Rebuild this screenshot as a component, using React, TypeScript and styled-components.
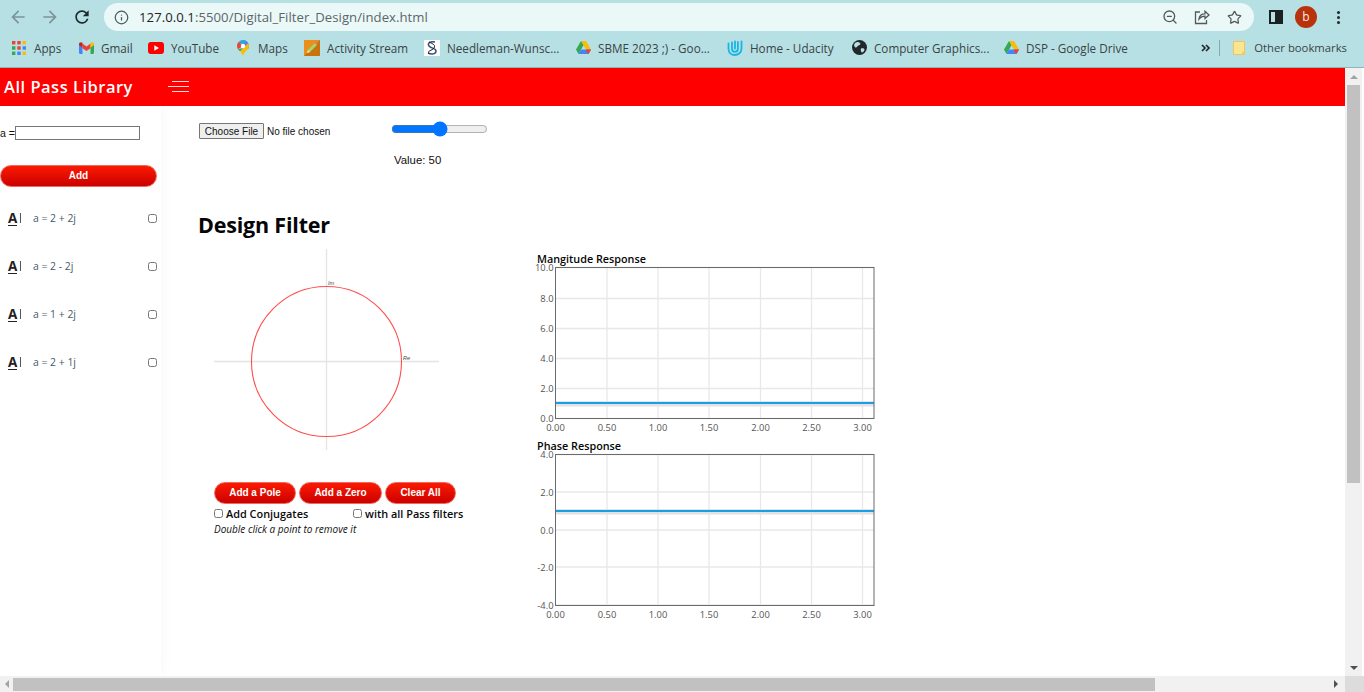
import { createGlobalStyle, styled } from "styled-components";
import { Info, Star, ZoomOut } from "lucide-react";

const GlobalStyle = createGlobalStyle`
  html, body {
    margin: 0;
    height: 100%;
    overflow: hidden;
    background: #fff;
  }
  #root {
    height: 100%;
  }
`;

const Shell = styled.div`
  height: 692px;
  width: 1364px;
  display: flex;
  flex-direction: column;
  overflow: hidden;
  font-family: "Liberation Sans", Arial, sans-serif;
`;

const Toolbar = styled.div`
  height: 34px;
  flex: none;
  display: flex;
  align-items: center;
  background: #b7e0e4;
  padding: 0 8px 0 6px;
  box-sizing: border-box;
`;

const NavButton = styled.div<{ $dim?: boolean }>`
  width: 24px;
  height: 24px;
  margin-right: 8px;
  display: flex;
  align-items: center;
  justify-content: center;
  color: ${({ $dim }) => ($dim ? "#7d9497" : "#1f2a2c")};
  &:nth-child(3) {
    margin-right: 10px;
  }
`;

const Omnibox = styled.div`
  width: 1150px;
  height: 28px;
  flex: none;
  display: flex;
  align-items: center;
  border-radius: 14px;
  background: #ebf8f8;
  padding: 0 8px 0 10px;
  box-sizing: border-box;
  color: #4e5a5c;
`;

const Url = styled.span`
  margin-left: 10px;
  flex: 1;
  font-family: "Open Sans", sans-serif;
  font-size: 13.15px;
  letter-spacing: 0.05px;
  color: #5b6668;
  b {
    font-weight: 400;
    color: #1d2526;
  }
`;

const OmniIcon = styled.div`
  width: 24px;
  margin-left: 8px;
  display: flex;
  justify-content: center;
  color: #56595a;
`;

const ToolIcons = styled.div`
  display: flex;
  align-items: center;
  margin-left: 15px;
  gap: 9px;
`;

const PanelIcon = styled.div`
  width: 14px;
  height: 14px;
  box-sizing: border-box;
  border: 2px solid #1b2021;
  border-right-width: 8px;
  margin: 0 3px 0 0;
`;

const Avatar = styled.div`
  width: 22px;
  height: 22px;
  border-radius: 50%;
  background: #b8330b;
  color: #ffe9e0;
  font-family: "Open Sans", sans-serif;
  font-size: 12px;
  line-height: 22px;
  text-align: center;
`;

const Dots = styled.div`
  width: 3px;
  height: 3px;
  border-radius: 50%;
  background: #23292a;
  margin-left: 11px;
  box-shadow: 0 -5px 0 #23292a, 0 5px 0 #23292a;
`;

const BookmarkBar = styled.div`
  height: 34px;
  flex: none;
  display: flex;
  align-items: center;
  padding: 0 0 6px 11px;
  box-sizing: border-box;
  background: #b7e0e4;
  border-bottom: 1px solid #93b5b9;
  font-family: "Open Sans", sans-serif;
  font-size: 11.7px;
  color: #3a4344;
`;

const Bookmark = styled.div<{ $width: number }>`
  width: ${({ $width }) => $width}px;
  flex: none;
  display: flex;
  align-items: center;
  white-space: nowrap;
`;

const BookmarkIcon = styled.div`
  width: 16px;
  height: 16px;
  margin-right: 7px;
  flex: none;
  display: flex;
  align-items: center;
  justify-content: center;
`;

const BookmarkRight = styled.div`
  margin-left: auto;
  display: flex;
  align-items: center;
  padding-right: 17px;
  font-size: 11.3px;
`;

const ChevronSlot = styled.div`
  display: flex;
  margin-right: 9px;
`;

const BarSeparator = styled.div`
  width: 1px;
  height: 16px;
  background: #8aa7aa;
  margin-right: 11px;
`;

const Viewport = styled.div`
  flex: 1;
  min-height: 0;
  display: flex;
`;

const Page = styled.div`
  width: 1345px;
  flex: none;
  display: flex;
  flex-direction: column;
`;

const AppBar = styled.header`
  height: 38px;
  flex: none;
  display: flex;
  align-items: center;
  box-sizing: border-box;
  padding: 0 0 2px 4px;
  background: #ff0000;
  color: #fff;
`;

const Brand = styled.div`
  width: 164px;
  font-family: "Open Sans", sans-serif;
  font-weight: 600;
  font-size: 16.5px;
  letter-spacing: 0.5px;
`;

const Hamburger = styled.div`
  width: 21px;
  display: flex;
  flex-direction: column;
  align-items: flex-end;
  gap: 4px;
`;

const HamburgerLine = styled.span<{ $width: number }>`
  display: block;
  height: 1px;
  width: ${({ $width }) => $width}px;
  background: #ffdcdc;
`;

const PageBody = styled.div`
  flex: 1;
  min-height: 0;
  display: flex;
`;

const Sidebar = styled.aside`
  width: 161px;
  flex: none;
  box-sizing: border-box;
  padding-top: 20px;
  background: #fff;
  box-shadow: 0 0 14px rgba(0, 0, 0, 0.045);
`;

const FieldRow = styled.label`
  display: flex;
  align-items: center;
  height: 14px;
  font-size: 10.6px;
  color: #111;
`;

const FieldInput = styled.input`
  width: 125px;
  height: 14px;
  box-sizing: border-box;
  margin: 0;
  padding: 0;
  border: 1px solid #767676;
  background: #fff;
`;

const RedButton = styled.button<{ $width: number }>`
  width: ${({ $width }) => $width}px;
  height: 22px;
  flex: none;
  padding: 0 0 1px;
  border: 1px solid #ee6a60;
  border-radius: 11px;
  background: linear-gradient(#fb1a00, #cb0000);
  color: #fff;
  font-family: "Liberation Sans", Arial, sans-serif;
  font-weight: 700;
  font-size: 10px;
  box-sizing: border-box;
`;

const AddSlot = styled.div`
  margin-top: 25px;
  margin-bottom: 7px;
  display: flex;
  height: 22px;
`;

const FilterRow = styled.div`
  height: 48px;
  display: flex;
  align-items: center;
  padding: 0 4px 0 8px;
`;

const LetterIcon = styled.span`
  width: 25px;
  flex: none;
  display: flex;
  align-items: flex-start;
  font-family: "Open Sans", sans-serif;
  font-weight: 700;
  font-size: 13.5px;
  line-height: 14px;
  color: #222;
`;

const LetterA = styled.span`
  border-bottom: 1.5px solid #222;
`;

const LetterBar = styled.span`
  width: 1px;
  height: 10px;
  margin: 2px 0 0 3px;
  background: #555;
`;

const FilterName = styled.span`
  flex: 1;
  font-family: "Open Sans", sans-serif;
  font-size: 10.4px;
  color: #47596a;
`;

const TinyCheck = styled.input.attrs({ type: "checkbox" })`
  width: 9px;
  height: 9px;
  margin: 0;
  flex: none;
`;

const Main = styled.main`
  flex: 1;
  min-width: 0;
  padding: 17px 0 0 38px;
`;

const UploadRow = styled.div`
  display: flex;
  align-items: flex-start;
  height: 84px;
`;

const FileField = styled.input`
  width: 192px;
  height: 18px;
  font-family: "Liberation Sans", Arial, sans-serif;
  font-size: 10px;
  color: #111;
  &::file-selector-button {
    width: 65px;
    height: 16px;
    margin-right: 3px;
    padding: 0;
    font-size: 10px;
    border: 1px solid #767676;
    border-radius: 1px;
    background: #efefef;
    color: #111;
  }
`;

const SliderBox = styled.div`
  font-size: 11.4px;
  color: #111;
`;

const Slider = styled.input`
  display: block;
  width: 97px;
  height: 12px;
  margin: 0 0 19px;
`;

const ValueText = styled.span`
  margin-left: 3px;
`;

const Title = styled.h1`
  margin: 0 0 6px -1px;
  font-family: "Open Sans", sans-serif;
  font-weight: 700;
  font-size: 21.5px;
  line-height: 36px;
  letter-spacing: -0.2px;
  color: #050505;
`;

const DesignRow = styled.div`
  display: flex;
  align-items: flex-start;
`;

const LeftColumn = styled.div`
  width: 338px;
  flex: none;
  padding-left: 15px;
  box-sizing: border-box;
`;

const PlaneSvg = styled.svg`
  display: block;
  margin-bottom: 32px;
  text {
    font-family: "Liberation Sans", Arial, sans-serif;
    font-size: 5.5px;
    font-style: italic;
    fill: #444;
  }
`;

const ButtonRow = styled.div`
  display: flex;
  gap: 3px;
  margin-bottom: 2px;
`;

const OptionRow = styled.div`
  display: flex;
  align-items: center;
  height: 15px;
  width: 260px;
  font-family: "Open Sans", sans-serif;
  font-weight: 600;
  font-size: 10.9px;
  color: #0a0a0a;
`;

const Option = styled.label<{ $width: number }>`
  width: ${({ $width }) => $width}px;
  flex: none;
  display: flex;
  align-items: center;
  gap: 3px;
`;

const Hint = styled.div`
  margin-top: 1px;
  font-family: "Open Sans", sans-serif;
  font-style: italic;
  font-size: 10px;
  color: #111;
`;

const ChartColumn = styled.div`
  padding-top: 3px;
`;

const ChartBlock = styled.section`
  width: 345px;
  margin-bottom: 7px;
`;

const ChartTitle = styled.div`
  height: 14px;
  font-family: "Open Sans", sans-serif;
  font-weight: 600;
  font-size: 10.8px;
  line-height: 14px;
  color: #050505;
`;

const ChartSvg = styled.svg`
  display: block;
  margin-top: -2px;
  overflow: visible;
  text {
    font-family: "Open Sans", sans-serif;
    font-size: 9.4px;
    fill: #555;
  }
`;

const VScroll = styled.div`
  width: 17px;
  flex: none;
  display: flex;
  flex-direction: column;
  align-items: center;
  background: #f1f1f1;
`;

const VThumb = styled.div`
  width: 13px;
  height: 398px;
  background: #c1c1c1;
`;

const ArrowSlot = styled.div`
  height: 17px;
  flex: none;
  display: flex;
  align-items: center;
  justify-content: center;
`;

const Arrow = styled.span<{ $dir: "up" | "down" | "left" | "right"; $dark?: boolean }>`
  width: 0;
  height: 0;
  border: 4px solid transparent;
  ${({ $dir, $dark }) => {
    const color = $dark ? "#505050" : "#a3a3a3";
    if ($dir === "up") return `border-top: 0; border-bottom-color: ${color};`;
    if ($dir === "down") return `border-bottom: 0; border-top-color: ${color};`;
    if ($dir === "left") return `border-left: 0; border-right-color: ${color};`;
    return `border-right: 0; border-left-color: ${color};`;
  }}
`;

const Spacer = styled.div`
  flex: 1;
`;

const HScroll = styled.div`
  height: 16px;
  flex: none;
  display: flex;
  align-items: center;
  background: #f1f1f1;
`;

const HArrow = styled.div`
  width: 13px;
  flex: none;
  display: flex;
  justify-content: center;
`;

const HThumb = styled.div`
  width: 1142px;
  height: 13px;
  flex: none;
  background: #c1c1c1;
`;

const ScrollCorner = styled.div`
  width: 19px;
  height: 16px;
  flex: none;
  background: #dcdcdc;
`;

const HArrowEnd = styled.div`
  margin-left: auto;
  width: 18px;
  display: flex;
  justify-content: center;
`;

const AppsIcon = () => {
  const colors = ["#ea4335", "#ea4335", "#fbbc05", "#34a853", "#ea4335", "#4285f4", "#34a853", "#4285f4", "#fbbc05"];
  return (
    <svg width="14" height="14" viewBox="0 0 14 14">
      {colors.map((c, i) => (
        <rect key={i} x={(i % 3) * 5.3} y={Math.floor(i / 3) * 5.3} width="3.4" height="3.4" fill={c} />
      ))}
    </svg>
  );
};

const GmailIcon = () => (
  <svg width="15" height="12" viewBox="0 0 15 12">
    <path d="M0 2v8.500c0 .8.600 1.500 1.400 1.500H3.500V5.500z" fill="#4285f4" />
    <path d="M15 2v8.500c0 .8-.6 1.500-1.400 1.500h-2.100V5.500z" fill="#34a853" />
    <path d="M3.500 6.200 7.500 9l4-2.800V1.600L7.500 4.600l-4-3z" fill="#ea4335" />
    <path d="M0 2c0-1.600 2-2.400 3.500-1.200v5L0 3z" fill="#c5221f" />
    <path d="M15 2c0-1.600-2-2.400-3.500-1.200v5L15 3z" fill="#fbbc05" />
  </svg>
);

const YouTubeIcon = () => (
  <svg width="16" height="12" viewBox="0 0 16 12">
    <rect width="16" height="12" rx="3" fill="#f00" />
    <path d="M6.300 3.300v5.400L11 6z" fill="#fff" />
  </svg>
);

const MapsIcon = () => (
  <svg width="12" height="16" viewBox="0 0 12 16">
    <path d="M6 0a6 6 0 0 1 6 6c0 1.200-.5 2.300-1 3.200L6 6z" fill="#4285f4" />
    <path d="M6 0a6 6 0 0 0-4.500 2L6 6l3.500-4.800A6 6 0 0 0 6 0z" fill="#34a4d8" />
    <path d="M1.500 2A6 6 0 0 0 0 6c0 1.200.4 2.200 1 3.200L6 6z" fill="#ea4335" />
    <path d="M12 6c0 3.500-5 5.500-6 10-.5-2-1.700-3.500-2.800-4.800L11 3.300c.7.800 1 1.700 1 2.700z" fill="#fbbc05" />
    <path d="M1 9.200c.6 1 1.400 1.500 2.200 2L6 8z" fill="#34a853" />
    <circle cx="6" cy="6" r="2.200" fill="#fff" />
  </svg>
);

const ActivityIcon = () => (
  <svg width="16" height="16" viewBox="0 0 16 16">
    <rect width="16" height="16" fill="#e8901c" />
    <path d="M0 16 16 0v16z" fill="#c9730f" />
    <path d="M3 13l1-3 7-7 2 2-7 7z" fill="#a5d86a" />
    <path d="M11 3l1.200-1.200 2 2L13 5z" fill="#e46a7c" />
    <path d="M3 13l1-3 2 2z" fill="#f4e1b5" />
  </svg>
);

const NeedlemanIcon = () => (
  <svg width="16" height="16" viewBox="0 0 16 16">
    <rect width="16" height="16" fill="#fff" />
    <path d="M11 2C6 1 3 3.500 5 6s7 2 7 5-4 4-8 2" fill="none" stroke="#37507a" strokeWidth="1.500" />
    <path d="M5 2c4 2 7 3 5 6s-7 2-5 6" fill="none" stroke="#222" strokeWidth="1" />
  </svg>
);

const DriveIcon = () => (
  <svg width="15" height="14" viewBox="0 0 15 14">
    <path d="M5 0h5l5 8.500h-5z" fill="#fbbc05" />
    <path d="M5 0 0 8.500 2.500 13 7.500 4.300z" fill="#34a853" />
    <path d="M5 8.500h10L12.500 13h-10z" fill="#4285f4" />
    <path d="M10 8.500h5L12.500 13 10 10z" fill="#ea4335" />
  </svg>
);

const UdacityIcon = () => (
  <svg width="16" height="16" viewBox="0 0 16 16" fill="none" stroke="#19b5e5" strokeWidth="1.800" strokeLinecap="round">
    <path d="M1.500 3.500v5.300c0 3.700 2.800 6.200 6.300 6.200s6.700-2.500 6.700-6.200V1.500" />
    <path d="M5 2.500v6.300c0 1.800 1.200 3 2.900 3s3-1.200 3-3V2" />
    <path d="M8 1.500v7" />
  </svg>
);

const GlobeIcon = () => (
  <svg width="15" height="15" viewBox="0 0 15 15">
    <circle cx="7.500" cy="7.500" r="7.500" fill="#22282a" />
    <path d="M3 3c2-1.500 4-1 5 0s0 2-1.500 2.500S5 8 3.500 7.500 1.500 4.500 3 3zM9 8.500c1.500-.5 3.500 0 3.500 1s-1.500 3-2.500 3-1.500-3.500-1-4z" fill="#b7e0e4" />
  </svg>
);

const FolderIcon = () => (
  <svg width="12" height="14" viewBox="0 0 12 14">
    <path d="M.5.500h11v13H.5z" fill="#fde58f" stroke="#e7c860" />
    <path d="M9 11h2.500v2.500H9z" fill="#f7cc4a" />
  </svg>
);

const ShareIcon = () => (
  <svg width="16" height="16" viewBox="0 0 16 16" fill="none" stroke="#56595a" strokeWidth="1.300">
    <path d="M6 3H1.500v11.500h11V11" />
    <path d="M5 10c.3-3.500 3-5.200 6-5.200V2.300l4 3.700-4 3.500V7.200C8.600 7.200 6.500 8 5 10z" />
  </svg>
);

const ChevronsIcon = () => (
  <svg width="9" height="8" viewBox="0 0 9 8" fill="none" stroke="#23292a" strokeWidth="1.700">
    <path d="M1 1l3 3-3 3M5 1l3 3-3 3" />
  </svg>
);

const bookmarks = [
  { label: "Apps", width: 67, icon: <AppsIcon /> },
  { label: "Gmail", width: 70, icon: <GmailIcon /> },
  { label: "YouTube", width: 87, icon: <YouTubeIcon /> },
  { label: "Maps", width: 69, icon: <MapsIcon /> },
  { label: "Activity Stream", width: 120, icon: <ActivityIcon /> },
  { label: "Needleman-Wunsc...", width: 151, icon: <NeedlemanIcon /> },
  { label: "SBME 2023 ;) - Goo...", width: 152, icon: <DriveIcon /> },
  { label: "Home - Udacity", width: 124, icon: <UdacityIcon /> },
  { label: "Computer Graphics...", width: 152, icon: <GlobeIcon /> },
  { label: "DSP - Google Drive", width: 150, icon: <DriveIcon /> },
];

const filters = ["a = 2 + 2j", "a = 2 - 2j", "a = 1 + 2j", "a = 2 + 1j"];

const xTicks = [
  { label: "0.00", x: 18.5 },
  { label: "0.50", x: 70 },
  { label: "1.00", x: 121 },
  { label: "1.50", x: 172 },
  { label: "2.00", x: 223.5 },
  { label: "2.50", x: 274.5 },
  { label: "3.00", x: 325.5 },
];

type ChartProps = {
  yTicks: { label: string; y: number }[];
  lineY: number;
};

// plot area runs from x=18.5 to x=337, y=0.5 to y=151.5
const ResponseChart = ({ yTicks, lineY }: ChartProps) => (
  <ChartSvg width="345" height="168" viewBox="0 -3 345 168">
    {xTicks.slice(1).map((t) => (
      <line key={t.label} x1={t.x} x2={t.x} y1="0.5" y2="151" stroke="#e8e8e8" strokeWidth="1.3" />
    ))}
    {yTicks.map((t) => (
      <line key={t.label} x1="18.5" x2="337" y1={t.y} y2={t.y} stroke="#e8e8e8" strokeWidth="1.3" />
    ))}
    <rect x="18.5" y={lineY - 2} width="318.5" height="5.5" fill="#e2e2e2" />
    <rect x="18.5" y={lineY - 1} width="318.5" height="2" fill="#18a0e4" />
    <rect x="18.5" y="0.5" width="318.5" height="151" fill="none" stroke="#6b6b6b" />
    {yTicks.map((t) => (
      <text key={t.label} x="16.5" y={t.y + 3.5} textAnchor="end">
        {t.label}
      </text>
    ))}
    {xTicks.map((t) => (
      <text key={t.label} x={t.x} y="164" textAnchor="middle">
        {t.label}
      </text>
    ))}
  </ChartSvg>
);

const magnitudeTicks = [
  { label: "10.0", y: 0.5 },
  { label: "8.0", y: 31.5 },
  { label: "6.0", y: 61.5 },
  { label: "4.0", y: 91.5 },
  { label: "2.0", y: 121.5 },
  { label: "0.0", y: 151.5 },
];

const phaseTicks = [
  { label: "4.0", y: 0.5 },
  { label: "2.0", y: 38 },
  { label: "0.0", y: 76 },
  { label: "-2.0", y: 113 },
  { label: "-4.0", y: 151 },
];

const App = () => {
  return (
    <Shell>
      <GlobalStyle />
      <Toolbar>
        <NavButton $dim>
          <svg width="20" height="20" viewBox="0 0 24 24" fill="currentColor">
            <path d="M20 11H7.830l5.590-5.590L12 4l-8 8 8 8 1.410-1.410L7.830 13H20v-2z" />
          </svg>
        </NavButton>
        <NavButton $dim>
          <svg width="20" height="20" viewBox="0 0 24 24" fill="currentColor">
            <path d="M4 11h12.170l-5.590-5.590L12 4l8 8-8 8-1.410-1.410L16.170 13H4v-2z" />
          </svg>
        </NavButton>
        <NavButton>
          <svg width="20" height="20" viewBox="0 0 24 24" fill="currentColor">
            <path d="M17.650 6.350A7.958 7.958 0 0 0 12 4c-4.420 0-7.990 3.580-7.990 8s3.570 8 7.990 8c3.730 0 6.840-2.550 7.730-6h-2.080A5.990 5.990 0 0 1 12 18c-3.310 0-6-2.690-6-6s2.690-6 6-6c1.660 0 3.140.690 4.220 1.780L13 11h7V4l-2.350 2.350z" />
          </svg>
        </NavButton>
        <Omnibox>
          <Info size={15} strokeWidth={2} />
          <Url>
            <b>127.0.0.1</b>:5500/Digital_Filter_Design/index.html
          </Url>
          <OmniIcon>
            <ZoomOut size={16} />
          </OmniIcon>
          <OmniIcon>
            <ShareIcon />
          </OmniIcon>
          <OmniIcon>
            <Star size={15} />
          </OmniIcon>
        </Omnibox>
        <ToolIcons>
          <PanelIcon />
          <Avatar>b</Avatar>
          <Dots />
        </ToolIcons>
      </Toolbar>

      <BookmarkBar>
        {bookmarks.map((b) => (
          <Bookmark key={b.label} $width={b.width}>
            <BookmarkIcon>{b.icon}</BookmarkIcon>
            {b.label}
          </Bookmark>
        ))}
        <BookmarkRight>
          <ChevronSlot>
            <ChevronsIcon />
          </ChevronSlot>
          <BarSeparator />
          <BookmarkIcon>
            <FolderIcon />
          </BookmarkIcon>
          Other bookmarks
        </BookmarkRight>
      </BookmarkBar>

      <Viewport>
        <Page>
          <AppBar>
            <Brand>All Pass Library</Brand>
            <Hamburger>
              <HamburgerLine $width={17} />
              <HamburgerLine $width={21} />
              <HamburgerLine $width={17} />
            </Hamburger>
          </AppBar>
          <PageBody>
            <Sidebar>
              <FieldRow>
                a =<FieldInput type="text" />
              </FieldRow>
              <AddSlot>
                <RedButton $width={157}>Add</RedButton>
              </AddSlot>
              {filters.map((f) => (
                <FilterRow key={f}>
                  <LetterIcon>
                    <LetterA>A</LetterA>
                    <LetterBar />
                  </LetterIcon>
                  <FilterName>{f}</FilterName>
                  <TinyCheck />
                </FilterRow>
              ))}
            </Sidebar>
            <Main>
              <UploadRow>
                <FileField type="file" />
                <SliderBox>
                  <Slider type="range" defaultValue={50} />
                  <ValueText>Value: 50</ValueText>
                </SliderBox>
              </UploadRow>
              <Title>Design Filter</Title>
              <DesignRow>
                <LeftColumn>
                  <PlaneSvg width="226" height="201" viewBox="0 0 226 201">
                    <line x1="0" x2="225" y1="112.5" y2="112.5" stroke="#e4e4e4" strokeWidth="1.3" />
                    <line x1="112.5" x2="112.5" y1="0" y2="201" stroke="#e4e4e4" strokeWidth="1.3" />
                    <circle cx="112.5" cy="112.5" r="75" fill="none" stroke="#ff4d4d" strokeWidth="1.1" />
                    <text x="114" y="36">
                      Im
                    </text>
                    <text x="189" y="111">
                      Re
                    </text>
                  </PlaneSvg>
                  <ButtonRow>
                    <RedButton $width={82}>Add a Pole</RedButton>
                    <RedButton $width={83}>Add a Zero</RedButton>
                    <RedButton $width={71}>Clear All</RedButton>
                  </ButtonRow>
                  <OptionRow>
                    <Option $width={139}>
                      <TinyCheck />
                      Add Conjugates
                    </Option>
                    <Option $width={121}>
                      <TinyCheck />
                      with all Pass filters
                    </Option>
                  </OptionRow>
                  <Hint>Double click a point to remove it</Hint>
                </LeftColumn>
                <ChartColumn>
                  <ChartBlock>
                    <ChartTitle>Mangitude Response</ChartTitle>
                    <ResponseChart yTicks={magnitudeTicks} lineY={136} />
                  </ChartBlock>
                  <ChartBlock>
                    <ChartTitle>Phase Response</ChartTitle>
                    <ResponseChart yTicks={phaseTicks} lineY={57} />
                  </ChartBlock>
                </ChartColumn>
              </DesignRow>
            </Main>
          </PageBody>
        </Page>
        <VScroll>
          <ArrowSlot>
            <Arrow $dir="up" />
          </ArrowSlot>
          <VThumb />
          <Spacer />
          <ArrowSlot>
            <Arrow $dir="down" $dark />
          </ArrowSlot>
        </VScroll>
      </Viewport>

      <HScroll>
        <HArrow>
          <Arrow $dir="left" />
        </HArrow>
        <HThumb />
        <HArrowEnd>
          <Arrow $dir="right" $dark />
        </HArrowEnd>
        <ScrollCorner />
      </HScroll>
    </Shell>
  );
};

export default App;
